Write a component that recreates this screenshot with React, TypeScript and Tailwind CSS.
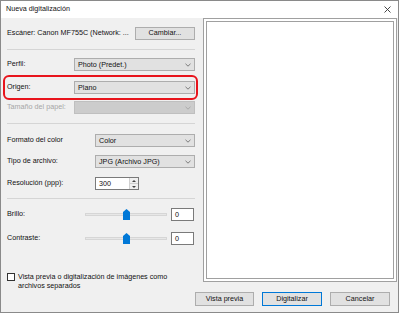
import React from 'react'

const font = { fontFamily: '"Liberation Sans", Arial, sans-serif' }

function Chevron({ color = '#606060' }: { color?: string }) {
  return (
    <svg width="6" height="4" viewBox="0 0 6 4" className="shrink-0">
      <path d="M0.5 0.8 L3 3.2 L5.5 0.8" fill="none" stroke={color} strokeWidth="0.8" />
    </svg>
  )
}

function Select({ value, w, disabled }: { value?: string; w: string; disabled?: boolean }) {
  return (
    <div
      className={`${w} h-[13px] flex items-center justify-between pl-[3px] pr-[3px] border ${
        disabled ? 'bg-[#cccccc] border-[#bfbfbf]' : 'bg-[#e1e1e1] border-[#adadad]'
      }`}
    >
      <span className="leading-none">{value}</span>
      <Chevron color={disabled ? '#a0a0a0' : '#606060'} />
    </div>
  )
}

function Slider() {
  return (
    <div className="relative w-[82px] h-[12px] flex items-center">
      <div className="w-full h-[3px] bg-[#e7e7e7] border border-[#d6d6d6]" />
      {/* thumb */}
      <svg width="7" height="11" viewBox="0 0 7 11" className="absolute left-[38px] top-0">
        <path d="M3.5 0 L7 3 L7 11 L0 11 L0 3 Z" fill="#0078d7" />
      </svg>
    </div>
  )
}

function Row({ children, mt }: { children: React.ReactNode; mt: string }) {
  return <div className={`${mt} flex items-center justify-between`}>{children}</div>
}

export default function App() {
  return (
    <div className="w-[399px] h-[314px] bg-white" style={font}>
      <div className="w-[399px] h-[313px] border border-[#8a8a8a] bg-[#f0f0f0] flex flex-col text-[7.2px] text-[#111]">
        {/* Title bar */}
        <div className="h-[17px] bg-white flex items-center justify-between pl-[5px] pr-[7px] shrink-0">
          <span className="text-[7.2px]">Nueva digitalización</span>
          <svg width="7" height="7" viewBox="0 0 7 7">
            <path d="M0.5 0.5 L6.5 6.5 M6.5 0.5 L0.5 6.5" stroke="#333" strokeWidth="0.9" />
          </svg>
        </div>

        <div className="flex flex-1">
          {/* Left settings column */}
          <div className="w-[202px] pl-[6px] pr-[8px] flex flex-col">
            <Row mt="mt-[9px]">
              <span>Escáner: Canon MF755C (Network: ...</span>
              <div className="w-[60px] h-[13px] bg-[#e1e1e1] border border-[#adadad] flex items-center justify-center">
                Cambiar...
              </div>
            </Row>

            <div className="mt-[9px] h-px bg-[#d5d5d5]" />

            <Row mt="mt-[8px]">
              <span>Perfil:</span>
              <Select value="Photo (Predet.)" w="w-[121px]" />
            </Row>

            <div className="relative mt-[10px]">
              <div className="absolute left-[-4px] right-[-3px] top-[-6px] bottom-[-6px] border-2 border-[#e8141c] rounded-[6px]" />
              <Row mt="mt-0">
                <span>Origen:</span>
                <Select value="Plano" w="w-[121px]" />
              </Row>
            </div>

            <Row mt="mt-[7px]">
              <span className="text-[#a6a6a6]">Tamaño del papel:</span>
              <Select w="w-[121px]" disabled />
            </Row>

            <div className="mt-[9px] h-px bg-[#d5d5d5]" />

            <Row mt="mt-[10px]">
              <span>Formato del color</span>
              <Select value="Color" w="w-[100px]" />
            </Row>

            <Row mt="mt-[8px]">
              <span>Tipo de archivo:</span>
              <Select value="JPG (Archivo JPG)" w="w-[100px]" />
            </Row>

            <div className="mt-[9px] flex items-center">
              <span className="w-[88px]">Resolución (ppp):</span>
              <div className="w-[44px] h-[13px] bg-white border border-[#7a7a7a] flex">
                <span className="flex-1 pl-[3px] leading-[11px]">300</span>
                <div className="w-[9px] flex flex-col border-l border-[#d0d0d0]">
                  <div className="flex-1 bg-[#f0f0f0] flex items-center justify-center border-b border-[#d0d0d0]">
                    <svg width="4" height="2" viewBox="0 0 4 2"><path d="M0 2 L2 0 L4 2 Z" fill="#444" /></svg>
                  </div>
                  <div className="flex-1 bg-[#f0f0f0] flex items-center justify-center">
                    <svg width="4" height="2" viewBox="0 0 4 2"><path d="M0 0 L2 2 L4 0 Z" fill="#444" /></svg>
                  </div>
                </div>
              </div>
            </div>

            <div className="mt-[8px] h-px bg-[#d5d5d5]" />

            <div className="mt-[9px] flex items-center h-[13px]">
              <span className="w-[78px]">Brillo:</span>
              <Slider />
              <div className="ml-[4px] w-[23px] h-[13px] bg-white border border-[#7a7a7a] pl-[3px] leading-[11px]">0</div>
            </div>

            <div className="mt-[11px] flex items-center h-[13px]">
              <span className="w-[78px]">Contraste:</span>
              <Slider />
              <div className="ml-[4px] w-[23px] h-[13px] bg-white border border-[#7a7a7a] pl-[3px] leading-[11px]">0</div>
            </div>

            <div className="mt-[27px] flex items-start">
              <div className="mt-[1px] w-[8px] h-[8px] bg-white border border-[#333] shrink-0" />
              <span className="ml-[3px] leading-[9px]">
                Vista previa o digitalización de imágenes como
                <br />
                archivos separados
              </span>
            </div>
          </div>

          {/* Preview + actions */}
          <div className="flex-1 flex flex-col">
            <div className="h-[264px] mr-[1px] border border-[#a0a0a0] bg-white p-[2px]">
              <div className="w-full h-full border border-[#a0a0a0] bg-white" />
            </div>
            <div className="mt-[10px] flex gap-[8px] ml-[-8px]">
              <div className="w-[59px] h-[14px] bg-[#e1e1e1] border border-[#adadad] flex items-center justify-center">
                Vista previa
              </div>
              <div className="w-[60px] h-[14px] bg-[#e1e1e1] border border-[#0078d7] flex items-center justify-center">
                Digitalizar
              </div>
              <div className="w-[60px] h-[14px] bg-[#e1e1e1] border border-[#adadad] flex items-center justify-center">
                Cancelar
              </div>
            </div>
          </div>
        </div>
      </div>
    </div>
  )
}
